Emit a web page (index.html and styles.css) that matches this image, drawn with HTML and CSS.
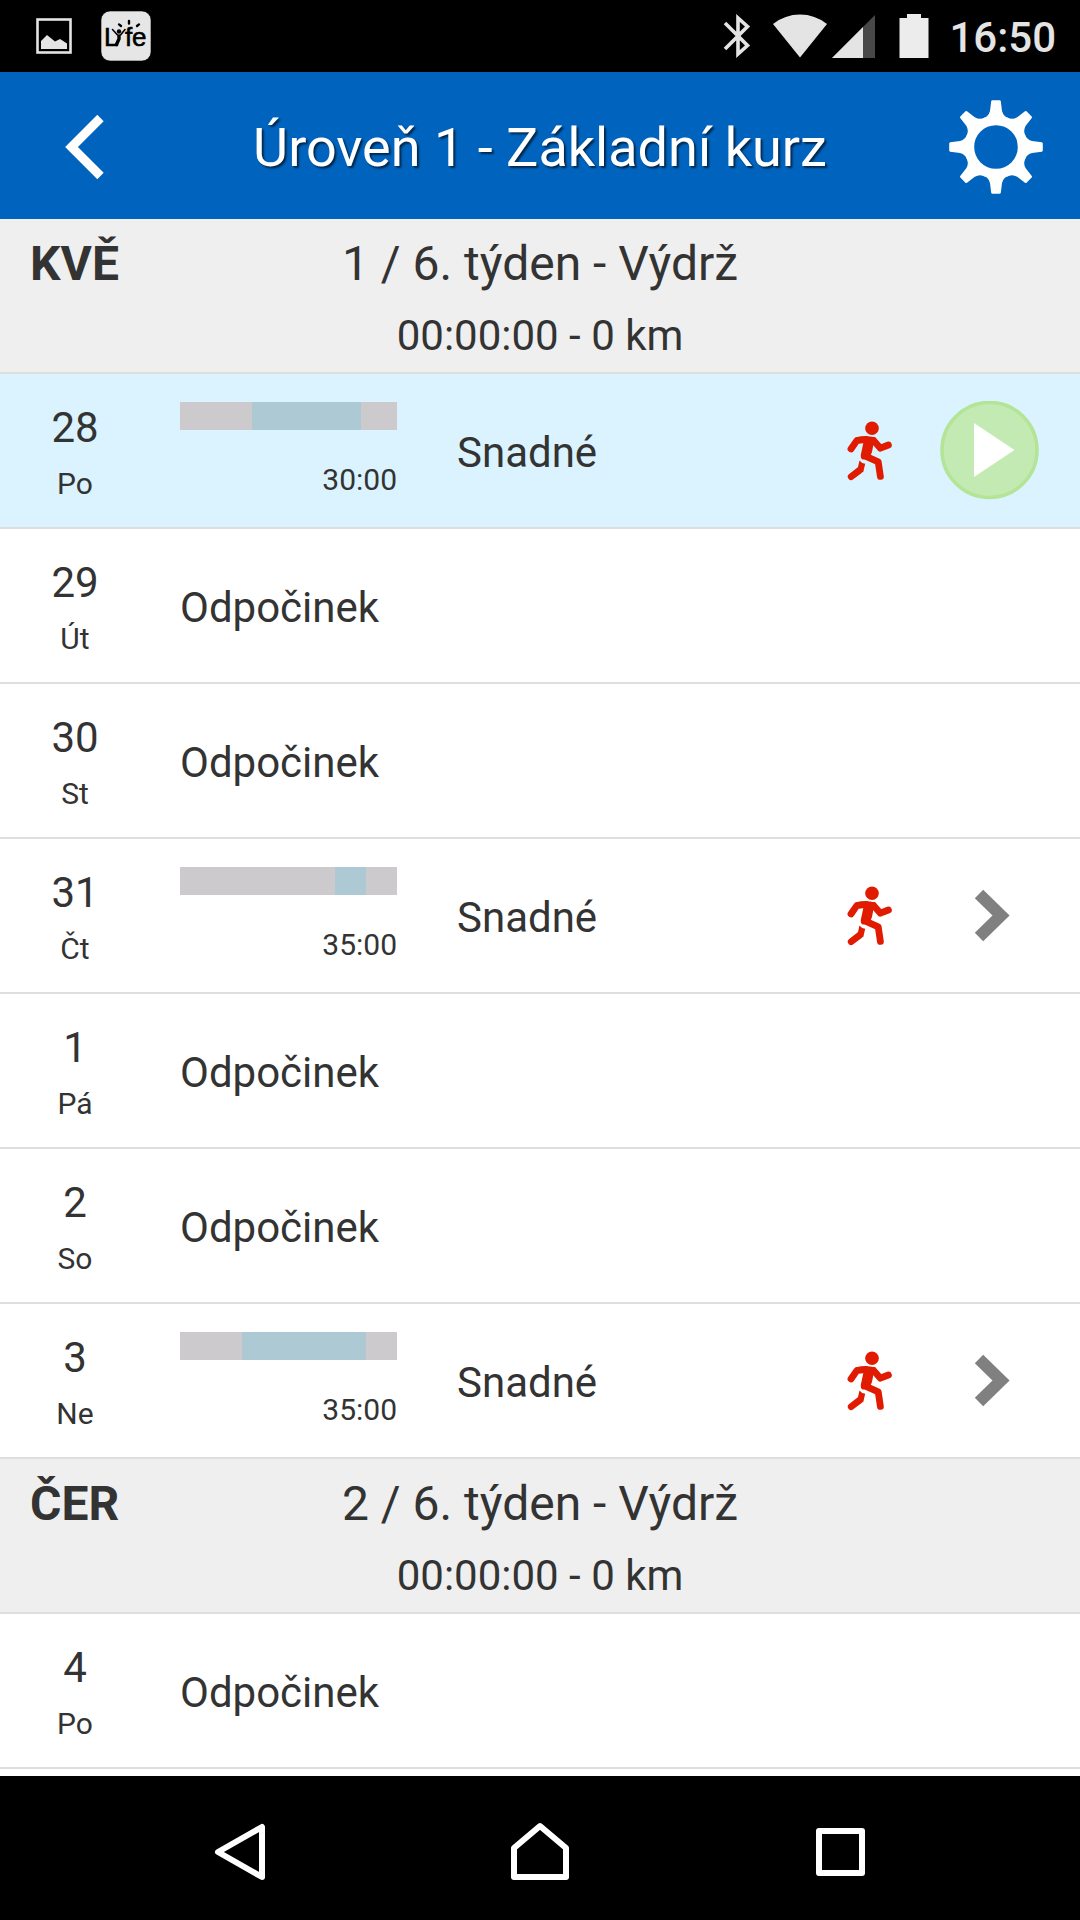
FILE: index.html
```html
<!DOCTYPE html>
<html lang="cs">
<head>
    <meta charset="UTF-8">
    <meta name="viewport" content="width=device-width, initial-scale=1.0">
    <title>Úroveň 1 - Základní kurz</title>
    <link rel="stylesheet" href="styles.css">
</head>
<body>
    <!-- shared icons -->
    <svg class="sprite" aria-hidden="true">
        <symbol id="icon-runner" viewBox="0 0 46 60">
            <circle cx="25" cy="7.3" r="6.8"/>
            <path d="M8 16.6 Q18 14 28.5 16.6 L31 21 L26.4 23.6 L25 31 L22 38 L15.5 38.5 Q13.3 37 13.8 34 L16.4 21.5 Z"/>
            <g fill="none" stroke="currentColor" stroke-width="6.8" stroke-linecap="round" stroke-linejoin="round">
                <path d="M4 28 L9.8 19.6 L19 18.4"/>
                <path d="M26.6 19.6 L33.4 27.2 L41.4 24"/>
                <path d="M17.4 34.6 L31.2 40.8 L33.4 55.4"/>
                <path d="M12.6 49.2 L4.2 55.6"/>
            </g>
            <path d="M12.5 39.6 Q14.5 42.6 18.2 42.8 L16.2 51.2 L10 49.6 L11 46 Z"/>
        </symbol>
        <symbol id="icon-chevron" viewBox="0 0 100 100">
            <path d="M39 28 L61 49.5 L39 71" fill="none" stroke="currentColor" stroke-width="12"/>
        </symbol>
    </svg>

    <div class="screen">
        <div class="status-bar">
            <svg class="status-picture" viewBox="0 0 36 36" aria-hidden="true">
                <rect x="1.5" y="1.5" width="33" height="33" fill="none" stroke="#e4e4e4" stroke-width="2.6"/>
                <path d="M5 31 V23 L11 17 L19 23.5 L24 21 L31 25.5 V31 Z" fill="#e4e4e4"/>
            </svg>
            <svg class="status-app" viewBox="0 0 50 50" role="img" aria-label="Lyfe">
                <rect width="50" height="50" rx="9" fill="#e6e6e6"/>
                <text x="3" y="34.6">L</text>
                <text x="24" y="34.6">f</text>
                <text x="31" y="34.6">e</text>
                <g fill="none" stroke="#000" stroke-linecap="round">
                    <circle cx="18" cy="20.5" r="2.2" fill="#000" stroke="none"/>
                    <path d="M11.5 18.5 L16.5 24 M24 18.5 L19.5 24" stroke-width="1.6"/>
                    <path d="M18 25 V28 L15.5 33.5" stroke-width="3.4"/>
                    <path d="M18 13.4 L20 15 M28 10 V12.5 M38 13.4 L36 15" stroke-width="2.4"/>
                </g>
            </svg>
            <div class="status-right">
                <svg class="status-bluetooth" viewBox="0 0 28 44" aria-hidden="true">
                    <path d="M2 9 L24.5 31.5 L15 40 V4 L24.5 12.5 L2 35" fill="none" stroke="#e4e4e4" stroke-width="3.6"/>
                </svg>
                <svg class="status-wifi" viewBox="0 0 54 44" aria-hidden="true">
                    <path d="M0 10 Q12 0.5 27 0.5 T54 10 L27 43.5 Z" fill="#e4e4e4"/>
                </svg>
                <svg class="status-signal" viewBox="0 0 43 43" aria-hidden="true">
                    <path d="M0 43 L43 0 V43 Z" fill="#484848"/>
                    <path d="M0 43 L31 12 V43 Z" fill="#e4e4e4"/>
                </svg>
                <svg class="status-battery" viewBox="0 0 30 44" aria-hidden="true">
                    <path d="M8 0 H22 V4 H29.5 V44 H0.5 V4 H8 Z" fill="#ececec"/>
                </svg>
                <time class="status-time">16:50</time>
            </div>
        </div>

        <header class="header">
            <button class="header-btn" type="button" aria-label="Zpět">
                <svg viewBox="0 0 100 100">
                    <path d="M66.5 21 L37.5 50 L66.5 79" fill="none" stroke="#fff" stroke-width="9"/>
                </svg>
            </button>
            <h1 class="header-title">Úroveň 1 - Základní kurz</h1>
            <button class="header-btn" type="button" aria-label="Nastavení">
                <svg viewBox="0 0 100 100">
                    <defs>
                        <path id="tooth" d="M-3.6 -46.8 H3.6 Q4.6 -46.8 4.8 -45.8 L6 -36 Q7.6 -30 13.5 -28.6 L10 -25 H-10 L-13.5 -28.6 Q-7.6 -30 -6 -36 L-4.8 -45.8 Q-4.6 -46.8 -3.6 -46.8 Z"/>
                    </defs>
                    <g transform="translate(50 50)" fill="#fff">
                        <circle r="26.5" fill="none" stroke="#fff" stroke-width="9.4"/>
                        <use href="#tooth"/>
                        <use href="#tooth" transform="rotate(45)"/>
                        <use href="#tooth" transform="rotate(90)"/>
                        <use href="#tooth" transform="rotate(135)"/>
                        <use href="#tooth" transform="rotate(180)"/>
                        <use href="#tooth" transform="rotate(225)"/>
                        <use href="#tooth" transform="rotate(270)"/>
                        <use href="#tooth" transform="rotate(315)"/>
                    </g>
                </svg>
            </button>
        </header>

        <main class="plan">
            <section>
                <div class="week">
                    <div class="week-month">KVĚ</div>
                    <div class="week-info">
                        <h2 class="week-title">1 / 6. týden - Výdrž</h2>
                        <div class="week-total">00:00:00 - 0 km</div>
                    </div>
                </div>
                <ul class="days">
                    <li class="day day-active">
                        <div class="date"><div class="date-number">28</div><div class="date-name">Po</div></div>
                        <div class="workout">
                            <div class="bar"><span style="flex: 10"></span><span class="run" style="flex: 15"></span><span style="flex: 5"></span></div>
                            <div class="duration">30:00</div>
                        </div>
                        <div class="label">Snadné</div>
                        <svg class="runner" aria-hidden="true"><use href="#icon-runner"/></svg>
                        <button class="action" type="button" aria-label="Spustit">
                            <svg viewBox="0 0 100 100">
                                <circle cx="49.5" cy="49" r="47.5" fill="#c4eab4" stroke="#b4e496" stroke-width="3.6"/>
                                <path d="M34 22 L74.5 49 L34 76 Z" fill="#fff"/>
                            </svg>
                        </button>
                    </li>
                    <li class="day">
                        <div class="date"><div class="date-number">29</div><div class="date-name">Út</div></div>
                        <div class="label">Odpočinek</div>
                    </li>
                    <li class="day">
                        <div class="date"><div class="date-number">30</div><div class="date-name">St</div></div>
                        <div class="label">Odpočinek</div>
                    </li>
                    <li class="day">
                        <div class="date"><div class="date-number">31</div><div class="date-name">Čt</div></div>
                        <div class="workout">
                            <div class="bar"><span style="flex: 25"></span><span class="run" style="flex: 5"></span><span style="flex: 5"></span></div>
                            <div class="duration">35:00</div>
                        </div>
                        <div class="label">Snadné</div>
                        <svg class="runner" aria-hidden="true"><use href="#icon-runner"/></svg>
                        <button class="action" type="button" aria-label="Detail"><svg><use href="#icon-chevron"/></svg></button>
                    </li>
                    <li class="day">
                        <div class="date"><div class="date-number">1</div><div class="date-name">Pá</div></div>
                        <div class="label">Odpočinek</div>
                    </li>
                    <li class="day">
                        <div class="date"><div class="date-number">2</div><div class="date-name">So</div></div>
                        <div class="label">Odpočinek</div>
                    </li>
                    <li class="day">
                        <div class="date"><div class="date-number">3</div><div class="date-name">Ne</div></div>
                        <div class="workout">
                            <div class="bar"><span style="flex: 10"></span><span class="run" style="flex: 20"></span><span style="flex: 5"></span></div>
                            <div class="duration">35:00</div>
                        </div>
                        <div class="label">Snadné</div>
                        <svg class="runner" aria-hidden="true"><use href="#icon-runner"/></svg>
                        <button class="action" type="button" aria-label="Detail"><svg><use href="#icon-chevron"/></svg></button>
                    </li>
                </ul>
            </section>

            <section>
                <div class="week">
                    <div class="week-month">ČER</div>
                    <div class="week-info">
                        <h2 class="week-title">2 / 6. týden - Výdrž</h2>
                        <div class="week-total">00:00:00 - 0 km</div>
                    </div>
                </div>
                <ul class="days">
                    <li class="day">
                        <div class="date"><div class="date-number">4</div><div class="date-name">Po</div></div>
                        <div class="label">Odpočinek</div>
                    </li>
                </ul>
            </section>
        </main>

        <nav class="nav-bar">
            <button class="nav-btn" type="button" aria-label="Zpět">
                <svg viewBox="0 0 60 60"><path d="M52 5 V55 L8 30 Z"/></svg>
            </button>
            <button class="nav-btn" type="button" aria-label="Domů">
                <svg viewBox="0 0 60 60"><path d="M30 4 L56 26 V55 H4 V26 Z"/></svg>
            </button>
            <button class="nav-btn" type="button" aria-label="Poslední aplikace">
                <svg viewBox="0 0 60 60"><path d="M9 9 H52 V51 H9 Z"/></svg>
            </button>
        </nav>
    </div>
</body>
</html>
```

FILE: styles.css
```css
* {
    box-sizing: border-box;
}
body {
    margin: 0;
    background: #fff;
    color: #333;
    font-family: Roboto, "Liberation Sans", sans-serif;
}
h1, h2, ul {
    margin: 0;
    padding: 0;
    font-weight: normal;
    list-style: none;
}
button {
    padding: 0;
    border: none;
    background: none;
    cursor: pointer;
}
svg {
    display: block;
}
.sprite {
    display: none;
}
.screen {
    display: flex;
    flex-direction: column;
    min-height: 100vh;
}

/* status bar */
.status-bar {
    display: flex;
    align-items: center;
    height: 72px;
    padding: 0 24px 0 36px;
    background: #000;
    color: #e4e4e4;
}
.status-picture {
    width: 36px;
    height: 36px;
}
.status-app {
    width: 50px;
    height: 50px;
    margin-left: 29px;
    font-family: "Liberation Sans", sans-serif;
    font-size: 26px;
    stroke: #000;
    stroke-width: 0.6px;
}
.status-right {
    display: flex;
    align-items: center;
    margin-left: auto;
}
.status-bluetooth {
    width: 28px;
    height: 44px;
}
.status-wifi {
    width: 54px;
    height: 44px;
    margin-left: 22px;
    stroke: none;
}
.status-signal {
    width: 43px;
    height: 43px;
    margin-left: 5px;
}
.status-battery {
    width: 30px;
    height: 44px;
    margin-left: 24px;
}
.status-time {
    margin-left: 20px;
    padding-top: 3px;
    font-size: 42px;
    font-weight: 500;
    line-height: 69px;
}

/* header */
.header {
    display: flex;
    align-items: center;
    justify-content: space-between;
    height: 147px;
    padding: 2px 34px 0;
    background: #0063be;
}
.header-btn svg {
    width: 100px;
    height: 100px;
}
.header-title {
    padding-top: 3px;
    color: #fff;
    font-size: 54px;
    line-height: 72px;
    text-shadow: 2px 2px 2px rgba(0, 0, 0, 0.6);
}

/* plan */
.plan {
    flex: 1;
}
.week {
    display: grid;
    grid-template-columns: 1fr auto 1fr;
    padding: 9px 30px 0;
    border-bottom: 2px solid #dedede;
    background: #efefef;
    font-size: 48px;
    line-height: 72px;
}
.week-month {
    font-weight: bold;
}
.week-info {
    text-align: center;
}
.week-title {
    font-size: 48px;
}
.week-total {
    font-size: 42px;
}
.day {
    display: flex;
    align-items: center;
    padding-right: 40px;
    border-bottom: 2px solid #dedede;
    line-height: 56px;
}
.day-active {
    background: #daf3ff;
}
.date {
    width: 150px;
    margin-right: 30px;
    padding: 26px 0 15px;
    text-align: center;
}
.date-number {
    font-size: 42px;
}
.date-name {
    font-size: 30px;
}
.workout {
    align-self: flex-start;
    width: 217px;
    margin: 28px 60px 0 0;
}
.bar {
    display: flex;
    height: 28px;
    margin-bottom: 22px;
    background: #cdcacd;
}
.run {
    background: #adc9d4;
}
.duration {
    font-size: 30px;
    text-align: right;
}
.label {
    flex: 1;
    padding-top: 4px;
    font-size: 42px;
}
.runner {
    width: 46px;
    height: 60px;
    margin-right: 47px;
    fill: #e01b00;
    color: #e01b00;
}
.action {
    color: #808080;
}
.action svg {
    width: 100px;
    height: 100px;
}

/* navigation bar */
.nav-bar {
    display: flex;
    align-items: center;
    justify-content: center;
    gap: 240px;
    height: 144px;
    padding-top: 8px;
    background: #000;
}
.nav-btn svg {
    width: 60px;
    height: 60px;
    fill: none;
    stroke: #fff;
    stroke-width: 6;
    stroke-linejoin: round;
}
```
